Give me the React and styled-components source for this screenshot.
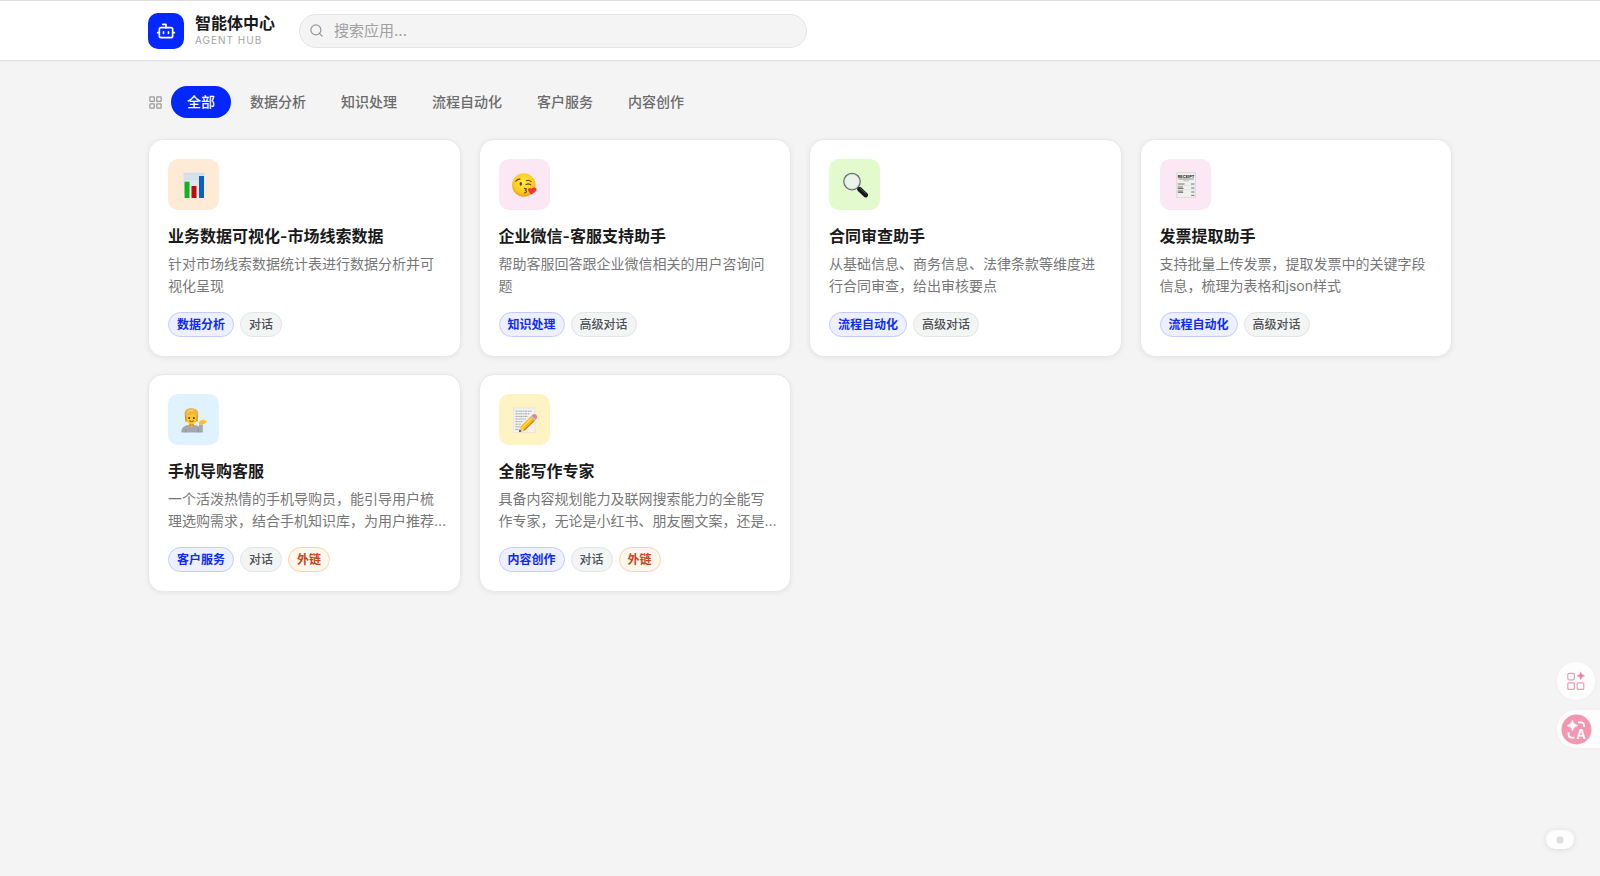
import React, { useState } from "react";
import styled, { createGlobalStyle, css } from "styled-components";
import { Bot, LayoutGrid, Search } from "lucide-react";

const GlobalStyle = createGlobalStyle`
  *, *::before, *::after { box-sizing: border-box; }
  body {
    margin: 0;
    background: #f4f4f4;
    color: #1a1a1a;
    font-family: Inter, "Noto Sans CJK SC", sans-serif;
  }
  button, input { font: inherit; }
`;

const Page = styled.div`
  min-height: 100vh;
`;

const Header = styled.header`
  background: #fff;
  border-top: 1px solid #dedede;
  border-bottom: 1px solid #e4e4e4;
  box-shadow: 0 1px 2px rgba(0, 0, 0, 0.03);
`;

const Container = styled.div`
  width: 100%;
  max-width: 1304px;
  margin: 0 auto;
`;

const HeaderRow = styled(Container)`
  display: flex;
  align-items: center;
  height: 59px;
`;

const Logo = styled.div`
  display: flex;
  align-items: center;
  justify-content: center;
  width: 36px;
  height: 36px;
  margin-right: 11px;
  border-radius: 10px;
  background: #0527ff;
  color: #fff;
`;

const Brand = styled.div`
  display: flex;
  flex-direction: column;
  width: 80px;
  margin-right: 24px;
  padding-bottom: 2px;
`;

const BrandName = styled.h1`
  margin: 0;
  font-size: 16px;
  font-weight: 600;
  line-height: 20px;
  white-space: nowrap;
`;

const BrandSub = styled.span`
  color: #a3a3a3;
  font-size: 10px;
  line-height: 14px;
  letter-spacing: 1px;
  white-space: nowrap;
`;

const SearchBox = styled.label`
  display: flex;
  align-items: center;
  gap: 10px;
  flex: 0 1 508px;
  height: 34px;
  padding: 0 12px 0 9px;
  border: 1px solid #e4e4e4;
  border-radius: 17px;
  background: #f4f4f4;
  color: #999;
`;

const SearchInput = styled.input`
  flex: 1;
  min-width: 0;
  padding: 0;
  border: 0;
  outline: 0;
  background: transparent;
  color: #1a1a1a;
  font-size: 15px;
  line-height: 20px;
  &::placeholder { color: #a0a0a0; opacity: 1; }
`;

const Filters = styled.nav`
  display: flex;
  align-items: center;
  gap: 3px;
  margin: 25px 0 21px;
  color: #999;
  svg { margin-right: 5px; }
`;

const FilterButton = styled.button`
  height: 32px;
  padding: 0 16px;
  border: 0;
  border-radius: 16px;
  background: ${(p) => (p.$active ? "#0527ff" : "transparent")};
  color: ${(p) => (p.$active ? "#fff" : "#6b6b6b")};
  font-size: 14px;
  font-weight: 500;
  line-height: 20px;
  cursor: pointer;
`;

const Grid = styled.main`
  display: grid;
  grid-template-columns: repeat(auto-fill, minmax(280px, 1fr));
  gap: 17px 18px;
`;

const Card = styled.article`
  padding: 19px 13px 19px 19px;
  border: 1px solid #e8e8e8;
  border-radius: 15px;
  background: #fff;
  box-shadow: 0 1px 5px rgba(0, 0, 0, 0.07);
`;

const IconTile = styled.div`
  display: flex;
  align-items: center;
  justify-content: center;
  width: 51px;
  height: 51px;
  border-radius: 10px;
  background: ${(p) => p.$tint};
`;

const CardTitle = styled.h2`
  margin: 14px 0 5px;
  font-size: 16px;
  font-weight: 600;
  line-height: 24px;
`;

const Description = styled.p`
  min-height: 44px;
  margin: 0 0 15px;
  color: #777;
  font-size: 14px;
  line-height: 22px;
`;

const Tags = styled.div`
  display: flex;
  gap: 6px;
`;

const tones = {
  category: css`
    border-color: #c3ccff;
    background: #eef0ff;
    color: #0d2bf5;
  `,
  mode: css`
    border-color: #e2e5e4;
    background: #f3f5f4;
    color: #4d5156;
  `,
  link: css`
    border-color: #ffd4a3;
    background: #fff7ec;
    color: #c8441b;
  `,
};

const Tag = styled.span`
  height: 25px;
  padding: 0 8px;
  border: 1px solid;
  border-radius: 13px;
  font-size: 12px;
  font-weight: ${(p) => (p.$tone === "mode" ? 500 : 600)};
  line-height: 23px;
  white-space: nowrap;
  ${(p) => tones[p.$tone]}
`;

const FloatTools = styled.aside`
  position: fixed;
  right: 0;
  bottom: 128px;
  display: flex;
  flex-direction: column;
  align-items: flex-end;
  gap: 10px;
`;

const FloatButton = styled.button`
  display: flex;
  align-items: center;
  height: 38px;
  padding: 0;
  border: 0;
  background: #fdfdfd;
  box-shadow: 0 0 4px rgba(0, 0, 0, 0.03);
  cursor: pointer;
  ${(p) =>
    p.$docked
      ? css`
          width: 43px;
          padding-left: 4px;
          border-radius: 19px 0 0 19px;
        `
      : css`
          width: 38px;
          justify-content: center;
          margin-right: 5px;
          border-radius: 50%;
        `}
`;

const MiniPill = styled.button`
  position: fixed;
  right: 26px;
  bottom: 27px;
  display: flex;
  align-items: center;
  justify-content: center;
  width: 28px;
  height: 19px;
  padding: 0;
  border: 0;
  border-radius: 10px;
  background: #fdfdfd;
  box-shadow: 0 1px 6px rgba(0, 0, 0, 0.1);
  cursor: pointer;
`;

const Dot = styled.span`
  width: 6px;
  height: 6px;
  border-radius: 50%;
  background: #dcdcdc;
  box-shadow: 0 0 0 1px #efefef;
`;

function Picture({ children }) {
  return (
    <svg width="26" height="26" viewBox="0 0 26 26" aria-hidden="true">
      {children}
    </svg>
  );
}

function ChartPicture() {
  return (
    <Picture>
      <defs>
        <linearGradient id="chartSheet" x1="0" y1="0" x2="0" y2="1">
          <stop offset="0" stopColor="#cfdde9" />
          <stop offset="1" stopColor="#f6f8fa" />
        </linearGradient>
      </defs>
      <rect x="2.5" y="0.7" width="21" height="25.3" fill="url(#chartSheet)" />
      <path d="M2.5 7H23.5M2.5 13H23.5M2.5 19H23.5" stroke="#c2d1de" strokeWidth="0.4" />
      <rect x="3.5" y="9.7" width="5" height="16.3" fill="#10b51c" />
      <rect x="10.5" y="14" width="5" height="12" fill="#c4070e" />
      <rect x="18" y="4" width="5" height="22" fill="#0c5fc0" />
    </Picture>
  );
}

function KissPicture() {
  return (
    <Picture>
      <defs>
        <radialGradient id="kissFace" cx="0.5" cy="0.4" r="0.6">
          <stop offset="0" stopColor="#ffec45" />
          <stop offset="0.7" stopColor="#fdcc20" />
          <stop offset="1" stopColor="#e99c12" />
        </radialGradient>
      </defs>
      <circle cx="12.8" cy="13" r="11.7" fill="url(#kissFace)" />
      <g fill="none" stroke="#6b4310" strokeWidth="1.1" strokeLinecap="round">
        <path d="M4.8 9.2Q6.5 6.9 9 7.1" />
        <path d="M15.3 8.7Q18 7.5 20 9.6" />
        <path d="M15 12.6Q17.3 11 19.8 12.9" />
        <path d="M13.4 16.4Q16.8 16.4 14.4 18.3Q17.2 19.8 13.4 21" />
      </g>
      <ellipse cx="9.8" cy="11.8" rx="1.2" ry="1.9" fill="#5f3b10" />
      <path d="M20 22.7L17.2 18.8C16 16.6 18.9 14.9 20.6 17C22.3 14.5 26.2 15.3 25.5 18C25 20 22.4 21.2 20 22.7Z" fill="#ef3a38" />
    </Picture>
  );
}

function MagnifierPicture() {
  return (
    <Picture>
      <path d="M15.4 15.4L18 18" stroke="#555" strokeWidth="2" />
      <path d="M17.6 17.3L23.6 23" stroke="#17191c" strokeWidth="4.8" strokeLinecap="round" />
      <path d="M18.2 16.4L24.2 21.8" stroke="#5b6067" strokeWidth="0.8" strokeLinecap="round" />
      <circle cx="10" cy="9.6" r="8.2" fill="#eaf4e8" stroke="#5f666e" strokeWidth="1.3" />
      <circle cx="10" cy="9.6" r="7.4" fill="none" stroke="#b9c2c8" strokeWidth="0.5" />
    </Picture>
  );
}

function ReceiptPicture() {
  return (
    <Picture>
      <path d="M4.8 0.7H23.4V26L22 25.3L20.5 26L19 25.3L17.5 26L16 25.3L14.5 26L13 25.3L11.5 26L10 25.3L8.5 26L7 25.3L4.8 26Z" fill="#f0f1ef" stroke="#c4c4c2" strokeWidth="0.5" />
      <text x="14.1" y="5.6" textAnchor="middle" fontSize="4" fontWeight="700" fill="#222">RECEIPT</text>
      <path d="M6.5 7H21.8" stroke="#666" strokeWidth="0.7" />
      <path d="M11.5 8.8H16.7" stroke="#999" strokeWidth="0.6" />
      <path d="M5.8 12H12.5M19 12H22.4M5.8 15H11M5.8 16.5H11.5M19.2 16H22.4M5.8 19H11M5.8 20.4H11.2M19.2 20H22.4M19.2 23.4H22.4" stroke="#555" strokeWidth="0.8" />
      <path d="M5.8 13.5H22.4M5.8 17.8H22.4" stroke="#cfcfcf" strokeWidth="0.4" />
    </Picture>
  );
}

function AssistantPicture() {
  return (
    <Picture>
      <path d="M0.3 25.6C0.3 20.5 3.5 18.4 8 18.1L10.5 20L13 18.1C15.5 18.2 17 18.8 17.8 20L18 17.4H21.8V25.6Z" fill="#a5a7aa" />
      <path d="M4.7 22.3V25.6M17.3 20.5V25.6" stroke="#818386" strokeWidth="0.6" />
      <path d="M8 15.5H13V18.2Q10.5 21 8 18.2Z" fill="#e0940f" />
      <path d="M3.8 8.4C3 3.4 6 1.2 10.2 1.4C15.6 1.2 18 4.4 17 8.6L16.6 14.6H4.4Z" fill="#cf8b1f" />
      <path d="M5.4 8Q10 8 12.3 5.8Q13.5 7.4 15.6 7.9V11.5Q15 17.4 10.5 17.4Q6 17.4 5.4 11.5Z" fill="#ffc928" />
      <path d="M4 8.4C3.8 3 7 1.4 10.5 1.6C15 1.5 17.6 4 16.9 8.6C14.8 8.2 13.4 7 12.3 5.4C10 8 7 7.9 4 8.4Z" fill="#f0b545" />
      <path d="M6.4 5.3Q8.6 2.9 12 3.2" fill="none" stroke="#fbdc86" strokeWidth="0.9" strokeLinecap="round" />
      <circle cx="8.1" cy="10.9" r="1" fill="#3d270a" />
      <circle cx="12.9" cy="10.9" r="1" fill="#3d270a" />
      <path d="M8.5 14Q10.5 15.6 12.5 14" fill="none" stroke="#a8431c" strokeWidth="1" strokeLinecap="round" />
      <path d="M17.9 17.4C17.6 15 18.5 13.6 20.5 13.3L23.8 12.5L23.2 13.7L26 13.6Q25.3 16.6 21.8 17.4Z" fill="#fcc024" />
    </Picture>
  );
}

function MemoPicture() {
  return (
    <Picture>
      <rect x="2.2" y="1" width="21.8" height="24.5" fill="#f1f2f1" stroke="#d4d6d5" strokeWidth="0.4" />
      <path d="M4.5 4.2H20.5M4.5 6.8H19M4.5 9.4H17M4.5 12H15M4.5 14.6H12M4.5 17.2H10M4.5 19.8H9M4.5 22.4H8" stroke="#8c8f90" strokeWidth="0.8" strokeDasharray="2.2 0.7 1.4 0.5" />
      <path d="M8 25L9.5 19.6L19.8 9.3L24 13.4L13.7 23.7Z" fill="#f7b81b" />
      <path d="M11 21L21.2 10.8" stroke="#ffdc59" strokeWidth="1.3" />
      <path d="M13.3 23.4L23.5 13.2" stroke="#d0820a" strokeWidth="1.2" />
      <path d="M8 25L9.5 19.6L13.7 23.7Z" fill="#eccb93" />
      <path d="M8 25L8.7 22.4L10.5 24.2Z" fill="#333" />
      <path d="M19.4 9.9L20.8 8.5L24.9 12.5L23.5 13.9Z" fill="#b8bcc0" />
      <path d="M20.8 8.5Q23 5.9 25.2 8Q27 10.2 24.9 12.5Z" fill="#ef7d86" />
    </Picture>
  );
}

function AppsSparkIcon() {
  return (
    <svg width="18" height="20" viewBox="0 0 18 20" aria-hidden="true">
      <g fill="none" stroke="#f29bb3" strokeWidth="1.2">
        <rect x="0.8" y="2.3" width="6.6" height="6.6" rx="1.4" />
        <rect x="0.8" y="11.8" width="6.6" height="6.6" rx="1" />
        <rect x="10.2" y="11.8" width="6.6" height="6.6" rx="1" />
      </g>
      <path d="M13.8 0.8Q14.3 4.3 17.6 4.8Q14.3 5.3 13.8 8.9Q13.3 5.3 10 4.8Q13.3 4.3 13.8 0.8Z" fill="#f0809e" stroke="#f0809e" strokeWidth="0.5" />
    </svg>
  );
}

function TranslateIcon() {
  return (
    <svg width="31" height="31" viewBox="0 0 31 31" aria-hidden="true">
      <circle cx="15.5" cy="15.5" r="15" fill="#f296b2" />
      <path d="M11.5 6Q12.4 10.6 17 11.5Q12.4 12.4 11.5 17Q10.6 12.4 6 11.5Q10.6 10.6 11.5 6Z" fill="#fff" stroke="#fff" strokeWidth="0.5" />
      <path d="M17 8.3H20Q23 8.3 23 11.2V13M7.6 18.3V20.3Q7.6 23.6 10.4 23.6H13.4" fill="none" stroke="#fff" strokeWidth="1.8" />
      <text x="20.2" y="25" textAnchor="middle" fontSize="13" fontWeight="700" fill="#fff">A</text>
    </svg>
  );
}

const categories = ["全部", "数据分析", "知识处理", "流程自动化", "客户服务", "内容创作"];

const apps = [
  {
    title: "业务数据可视化-市场线索数据",
    text: "针对市场线索数据统计表进行数据分析并可视化呈现",
    category: "数据分析",
    mode: "对话",
    tint: "#ffead6",
    Art: ChartPicture,
  },
  {
    title: "企业微信-客服支持助手",
    text: "帮助客服回答跟企业微信相关的用户咨询问题",
    category: "知识处理",
    mode: "高级对话",
    tint: "#fce7f4",
    Art: KissPicture,
  },
  {
    title: "合同审查助手",
    text: "从基础信息、商务信息、法律条款等维度进行合同审查，给出审核要点",
    category: "流程自动化",
    mode: "高级对话",
    tint: "#e3fbcc",
    Art: MagnifierPicture,
  },
  {
    title: "发票提取助手",
    text: "支持批量上传发票，提取发票中的关键字段信息，梳理为表格和json样式",
    category: "流程自动化",
    mode: "高级对话",
    tint: "#fce7f4",
    Art: ReceiptPicture,
  },
  {
    title: "手机导购客服",
    text: "一个活泼热情的手机导购员，能引导用户梳理选购需求，结合手机知识库，为用户推荐...",
    category: "客户服务",
    mode: "对话",
    external: true,
    tint: "#e0f2fe",
    Art: AssistantPicture,
  },
  {
    title: "全能写作专家",
    text: "具备内容规划能力及联网搜索能力的全能写作专家，无论是小红书、朋友圈文案，还是...",
    category: "内容创作",
    mode: "对话",
    external: true,
    tint: "#fef3c3",
    Art: MemoPicture,
  },
];

export default function App() {
  const [active, setActive] = useState("全部");
  const [query, setQuery] = useState("");
  const shown = apps.filter(
    (app) => (active === "全部" || app.category === active) && app.title.includes(query)
  );

  return (
    <Page>
      <GlobalStyle />
      <Header>
        <HeaderRow>
          <Logo>
            <Bot size={20} aria-hidden="true" />
          </Logo>
          <Brand>
            <BrandName>智能体中心</BrandName>
            <BrandSub>AGENT HUB</BrandSub>
          </Brand>
          <SearchBox>
            <Search size={15} aria-hidden="true" />
            <SearchInput
              type="text"
              aria-label="搜索应用"
              placeholder="搜索应用..."
              value={query}
              onChange={(e) => setQuery(e.target.value)}
            />
          </SearchBox>
        </HeaderRow>
      </Header>
      <Container>
        <Filters>
          <LayoutGrid size={15} aria-hidden="true" />
          {categories.map((name) => (
            <FilterButton
              key={name}
              type="button"
              $active={name === active}
              aria-pressed={name === active}
              onClick={() => setActive(name)}
            >
              {name}
            </FilterButton>
          ))}
        </Filters>
        <Grid>
          {shown.map(({ title, text, category, mode, external, tint, Art }) => (
            <Card key={title}>
              <IconTile $tint={tint}>
                <Art />
              </IconTile>
              <CardTitle>{title}</CardTitle>
              <Description>{text}</Description>
              <Tags>
                <Tag $tone="category">{category}</Tag>
                <Tag $tone="mode">{mode}</Tag>
                {external && <Tag $tone="link">外链</Tag>}
              </Tags>
            </Card>
          ))}
        </Grid>
      </Container>
      <FloatTools>
        <FloatButton type="button" aria-label="应用">
          <AppsSparkIcon />
        </FloatButton>
        <FloatButton type="button" $docked aria-label="翻译">
          <TranslateIcon />
        </FloatButton>
      </FloatTools>
      <MiniPill type="button" aria-label="展开">
        <Dot />
      </MiniPill>
    </Page>
  );
}
